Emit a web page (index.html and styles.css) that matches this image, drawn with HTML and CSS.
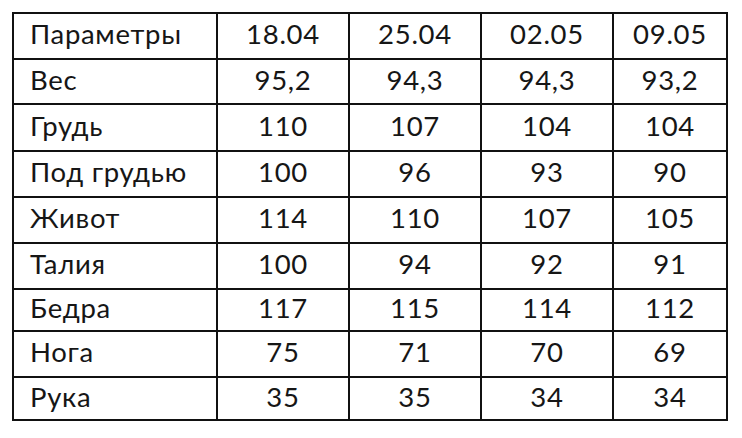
FILE: index.html
```html
<!DOCTYPE html>
<html lang="ru">
<head>
<meta charset="utf-8">
<link rel="stylesheet" href="styles.css">
</head>
<body>
<div class="sheet">
  <div class="grid">
    <div class="c name">Параметры</div><div class="c">18.04</div><div class="c">25.04</div><div class="c">02.05</div><div class="c">09.05</div>
    <div class="c name">Вес</div><div class="c">95,2</div><div class="c">94,3</div><div class="c">94,3</div><div class="c">93,2</div>
    <div class="c name">Грудь</div><div class="c">110</div><div class="c">107</div><div class="c">104</div><div class="c">104</div>
    <div class="c name">Под грудью</div><div class="c">100</div><div class="c">96</div><div class="c">93</div><div class="c">90</div>
    <div class="c name">Живот</div><div class="c">114</div><div class="c">110</div><div class="c">107</div><div class="c">105</div>
    <div class="c name">Талия</div><div class="c">100</div><div class="c">94</div><div class="c">92</div><div class="c">91</div>
    <div class="c name">Бедра</div><div class="c">117</div><div class="c">115</div><div class="c">114</div><div class="c">112</div>
    <div class="c name">Нога</div><div class="c">75</div><div class="c">71</div><div class="c">70</div><div class="c">69</div>
    <div class="c name">Рука</div><div class="c">35</div><div class="c">35</div><div class="c">34</div><div class="c">34</div>
  </div>
</div>
</body>
</html>
```
FILE: styles.css
```css
html, body {
  margin: 0;
  padding: 0;
  background: #ffffff;
}
body {
  width: 742px;
  height: 438px;
  overflow: hidden;
  font-family: Lato, "Open Sans", "Liberation Sans", sans-serif;
}
.sheet {
  padding: 12px 0 0 12px;
}
.grid {
  display: inline-grid;
  grid-template-columns: 202px 130px 130px 130px 112px;
  grid-template-rows: 44px 43px 45px 44px 44px 44px 40px 44px 41px;
  gap: 2px;
  padding: 2px;
  background: #111111;
}
.c {
  background: #ffffff;
  color: #161616;
  font-size: 27.5px;
  letter-spacing: 0.7px;
  line-height: 1;
  display: flex;
  align-items: center;
  justify-content: center;
  padding-bottom: 4px;
  box-sizing: border-box;
}
.c.name {
  justify-content: flex-start;
  padding-left: 16px;
}
```
